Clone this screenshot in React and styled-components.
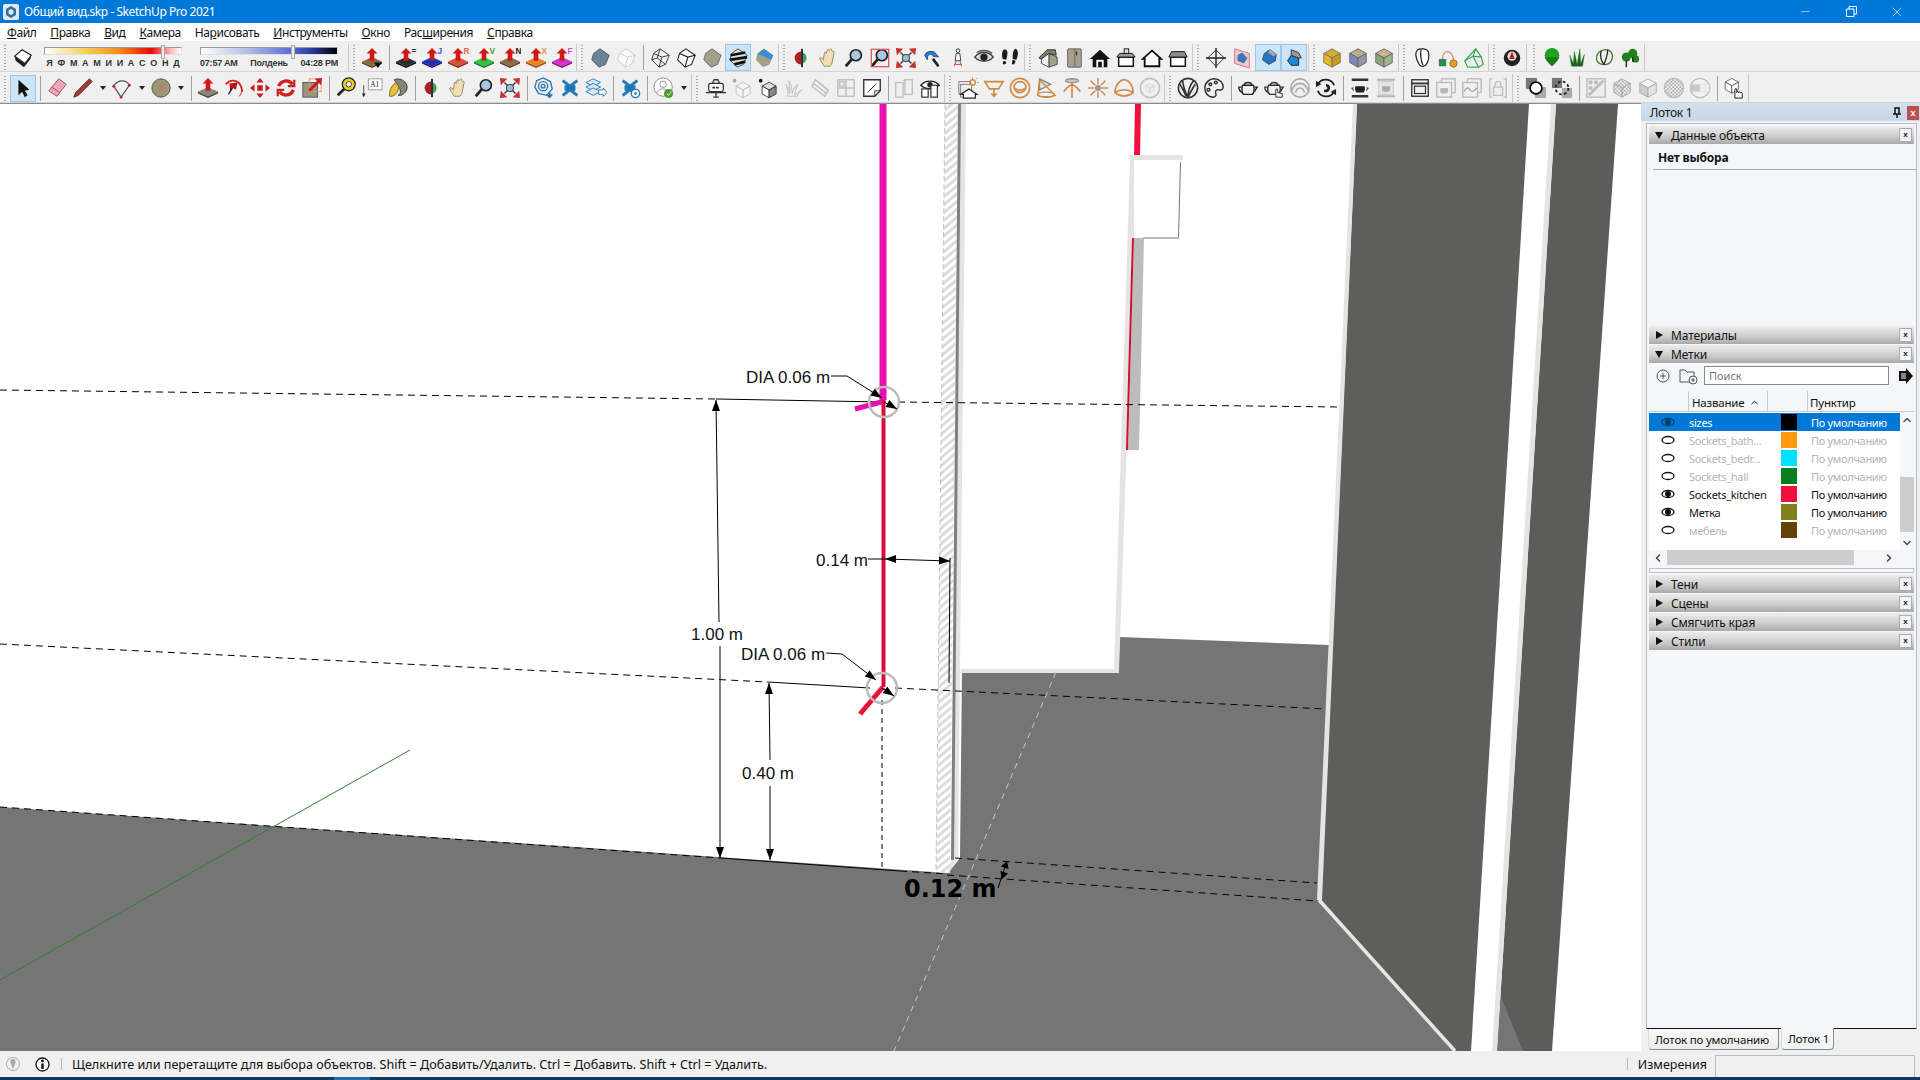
import React from 'react';
import styled, { createGlobalStyle } from 'styled-components';
import { ChevronUp, ChevronDown, ChevronLeft, ChevronRight, Minus, X } from 'lucide-react';

const UI = '"Noto Sans", "Open Sans", sans-serif';

const Global = createGlobalStyle`
  html, body { margin: 0; padding: 0; background: #f0f0f0; overflow: hidden; }
  body { font: 12px ${UI}; color: #111; }
`;

const Page = styled.div`
  width: 1920px;
  height: 1080px;
  display: flex;
  flex-direction: column;
  overflow: hidden;
`;

/* window chrome */
const TitleBar = styled.div`
  height: 23px;
  background: #0078d7;
  color: #fff;
  display: flex;
  align-items: center;
  padding-left: 3px;
`;
const TitleText = styled.span`
  margin-left: 5px;
  flex: 1;
  font-size: 12px;
  letter-spacing: -0.45px;
`;
const WinBtn = styled.div`
  width: 46px;
  height: 23px;
  display: flex;
  align-items: center;
  justify-content: center;
`;
const MenuBar = styled.div`
  height: 18px;
  box-sizing: border-box;
  padding: 2px 0 0 7px;
  background: #fff;
  display: flex;
  align-items: center;
  gap: 14px;
`;
const MenuItem = styled.span`
  font-size: 12px;
  letter-spacing: -0.42px;
  line-height: 16px;
`;

/* toolbars */
const Toolbars = styled.div`
  height: 62px;
  display: flex;
  flex-direction: column;
  background: #f0f0f0;
`;
const Row = styled.div`
  height: 31px;
  display: flex;
  padding-top: ${p => p.$pt}px;
  border-bottom: 1px solid #d4d4d4;
  box-sizing: border-box;
`;
const Group = styled.div`
  display: flex;
  align-items: center;
  padding-right: 1px;
  border-right: 1px solid #c8c8c8;
  margin-left: ${p => p.$ml || 0}px;
  ${p => (p.$width ? `width: ${p.$width}px; box-sizing: border-box;` : '')}
`;
const Grip = styled.div`
  width: ${p => p.$w || 10}px;
  height: 25px;
  flex: none;
  background: repeating-linear-gradient(#a8a8a8 0 1px, transparent 1px 3px) 4px 0 / 2px 100% no-repeat;
`;
const Btn = styled.div`
  width: 26px;
  height: 27px;
  flex: none;
  box-sizing: border-box;
  display: flex;
  align-items: center;
  justify-content: center;
  background: ${p => (p.$active ? '#cce4f7' : 'transparent')};
  border: 1px solid ${p => (p.$active ? '#9cc7ea' : 'transparent')};
`;
const Sep = styled.div`
  width: ${p => p.$w || 8}px;
  height: 25px;
  flex: none;
  display: flex;
  justify-content: center;
  &::after { content: ''; width: 1px; background: #a0a0a0; }
`;
const Drop = styled.div`
  width: 13px;
  flex: none;
  display: flex;
  justify-content: center;
  &::after {
    content: '';
    border: 3px solid transparent;
    border-top: 4px solid #222;
    border-bottom: 0;
  }
`;
const Ico = styled.svg`
  width: 22px;
  height: 22px;
  flex: none;
  display: block;
`;

/* shadow sliders */
const SliderBlock = styled.div`
  width: 138px;
  margin-left: ${p => p.$ml}px;
  flex: none;
  display: flex;
  flex-direction: column;
  padding-top: 1px;
`;
const Track = styled.div`
  position: relative;
  height: 6px;
  border: 1px solid #9a9a9a;
  border-bottom-color: #e0e0e0;
  border-right-color: #e0e0e0;
  background: ${p => p.$bg};
  margin-bottom: 3px;
`;
const Thumb = styled.div`
  position: absolute;
  top: -3px;
  left: ${p => p.$at}px;
  width: 4px;
  height: 14px;
  background: #eee;
  border: 1px solid #aaa;
  box-sizing: border-box;
`;
const TickRow = styled.div`
  display: flex;
  justify-content: ${p => (p.$even ? 'space-around' : 'space-between')};
  font: 700 9px "Liberation Sans", sans-serif;
  line-height: 11px;
  letter-spacing: ${p => (p.$even ? '0' : '-0.2px')};
  color: #333;
`;

/* main area */
const Main = styled.div`
  height: 948px;
  display: flex;
`;
const Viewport = styled.div`
  width: 1641px;
  flex: none;
  background: #fff;
  border-top: 1px solid #8a8a8a;
  box-sizing: border-box;
  & > svg { display: block; }
`;
const Label = styled.text`
  font: 17px "Liberation Sans", sans-serif;
  fill: #111;
`;
const BigLabel = styled.text`
  font: 700 24px "DejaVu Sans", sans-serif;
  fill: #000;
`;

/* tray */
const Tray = styled.div`
  width: 279px;
  flex: none;
  display: flex;
  flex-direction: column;
`;
const TrayTitle = styled.div`
  height: 18px;
  box-sizing: border-box;
  flex: none;
  display: flex;
  align-items: center;
  padding: 1px 1px 0 9px;
  gap: 5px;
  background: linear-gradient(#d3e0ee, #c6d6e6);
`;
const TrayName = styled.span`
  flex: 1;
  font-size: 12px;
  letter-spacing: -0.3px;
`;
const TrayClose = styled.div`
  width: 12px;
  height: 14px;
  background: #c05050;
  color: #fff;
  font: 700 9px/14px "Liberation Sans", sans-serif;
  text-align: center;
`;
const Frame = styled.div`
  flex: 1;
  margin: 2px 3px 0 5px;
  padding: 2px;
  border: 1px solid #b4bcc4;
  border-bottom: 1px solid #111;
  background: #f4f6f9;
  display: flex;
  flex-direction: column;
  gap: 1px;
`;
const PanelHead = styled.div`
  height: 18px;
  flex: none;
  display: flex;
  align-items: center;
  padding: 0 2px 0 6px;
  gap: 8px;
  background: linear-gradient(#ececec, #cfcfcf 55%, #a9a9a9);
`;
const PanelName = styled.span`
  flex: 1;
  font-size: 12px;
  letter-spacing: -0.15px;
`;
const CloseBox = styled.div`
  width: 13px;
  height: 14px;
  box-sizing: border-box;
  border: 1px solid #aab;
  background: #f2f2f2;
  font: 700 8px/12px "Liberation Sans", sans-serif;
  text-align: center;
`;
const InfoBody = styled.div`
  height: 180px;
  box-sizing: border-box;
  flex: none;
  padding: 4px 0 0 4px;
`;
const InfoTitle = styled.div`
  font-size: 12px;
  font-weight: 700;
  letter-spacing: -0.2px;
  padding: 0 0 3px 5px;
  border-bottom: 1px solid #a8a8a8;
  height: 21px;
  box-sizing: border-box;
  margin-right: -2px;
`;
const TagsBody = styled.div`
  flex: none;
  display: flex;
  flex-direction: column;
  padding-top: 2px;
`;
const SearchRow = styled.div`
  height: 19px;
  display: flex;
  align-items: center;
  padding-left: 6px;
`;
const SearchBox = styled.div`
  width: 185px;
  height: 19px;
  box-sizing: border-box;
  margin-left: 5px;
  border: 1px solid #8a8a8a;
  background: #fff;
  color: #777;
  font-size: 11px;
  line-height: 17px;
  padding-left: 4px;
`;
const SearchIcon = styled.svg`
  margin-left: ${p => p.$ml}px;
  flex: none;
`;
const ColHead = styled.div`
  height: 21px;
  margin-top: 6px;
  display: grid;
  grid-template-columns: 39px 79px 40px 95px;
  border-bottom: 1px solid #c9c9c9;
  box-sizing: border-box;
`;
const ColCell = styled.div`
  border-left: ${p => (p.$first ? '0' : '1px solid #c9c9c9')};
  padding: 3px 0 0 ${p => p.$pl || 4}px;
  box-sizing: border-box;
  font-size: 11.5px;
  letter-spacing: -0.2px;
  line-height: 16px;
  display: flex;
  align-items: center;
  gap: 5px;
`;
const ListWrap = styled.div`
  height: 137px;
  margin-top: 1px;
  display: flex;
`;
const List = styled.div`
  width: 251px;
  background: #fff;
`;
const TagRow = styled.div`
  height: 18px;
  display: grid;
  grid-template-columns: 40px 92px 16px 14px 1fr;
  align-items: center;
  background: ${p => (p.$selected ? '#0078d7' : 'transparent')};
  color: ${p => (p.$selected ? '#fff' : p.$off ? '#b4b4b4' : '#111')};
  font-size: 11px;
  letter-spacing: -0.3px;
`;
const EyeCell = styled.div`
  display: flex;
  justify-content: center;
  padding-right: 2px;
`;
const Swatch = styled.div`
  height: 16px;
  background: ${p => p.$c};
`;
const VScroll = styled.div`
  width: 14px;
  position: relative;
  display: flex;
  flex-direction: column;
  justify-content: space-between;
  align-items: center;
  padding: 1px 0;
  box-sizing: border-box;
  color: #555;
`;
const VThumb = styled.div`
  position: absolute;
  left: 0;
  right: 0;
  top: 64px;
  height: 55px;
  background: #cdcdcd;
`;
const HScroll = styled.div`
  height: 15px;
  display: flex;
  align-items: center;
  padding: 0 18px 0 3px;
  color: #444;
`;
const HThumb = styled.div`
  width: 187px;
  height: 15px;
  margin: 0 29px 0 3px;
  background: #cdcdcd;
`;
const DoubleLine = styled.div`
  height: 5px;
  margin: 3px 0 1px;
  border: 1px solid #c4c4c4;
  flex: none;
  box-sizing: border-box;
`;
const Spacer = styled.div`
  flex: 1;
`;
const TabRow = styled.div`
  height: 22px;
  flex: none;
  display: flex;
  padding-left: 7px;
  background: #f0f0f0;
`;
const Tab = styled.div`
  width: ${p => p.$w}px;
  box-sizing: border-box;
  padding-left: 6px;
  margin-right: 2px;
  margin-top: ${p => (p.$on ? '-1px' : 0)};
  height: ${p => (p.$on ? '22px' : '21px')};
  border: 1px solid #8a8a8a;
  border-top: 0;
  border-left-color: #ddd;
  border-radius: 0 0 4px 4px;
  background: ${p => (p.$on ? '#f4f6f9' : 'linear-gradient(#f7f7f7, #ececec)')};
  font-size: 11.5px;
  letter-spacing: -0.2px;
  line-height: 21px;
`;

/* status bar */
const StatusBar = styled.div`
  height: 26px;
  flex: none;
  display: flex;
  align-items: center;
  background: #f0f0f0;
  padding-left: 4px;
`;
const StatusIcon = styled.div`
  width: 18px;
  display: flex;
  justify-content: center;
  margin-left: ${p => p.$ml || 0}px;
`;
const StatusBreak = styled.div`
  width: 1px;
  height: 12px;
  background: #b8b8b8;
  margin: ${p => p.$m};
  flex: none;
`;
const StatusText = styled.span`
  flex: 1;
  font-size: 12.6px;
`;
const MeasureLabel = styled.span`
  font-size: 12.5px;
`;
const MeasureBox = styled.div`
  width: 200px;
  height: 22px;
  margin: 4px 5px 0 8px;
  box-sizing: border-box;
  border: 1px solid #aebccb;
  border-bottom: 0;
`;
const Taskbar = styled.div`
  height: 3px;
  flex: none;
  background: linear-gradient(90deg, #12395e 0 334px, #1f6aa8 334px 370px, #12395e 370px);
`;

/* ---- icons ---- */
const HEX = '12,2 22,9 18,19 11,22 3,14 5,7';
const push = (top, side, tag, tagColor) => (
  <>
    <polygon points="12,11 23,16 12,21 1,16" fill={top} />
    <polygon points="1,16 12,21 12,23 1,18" fill={side} />
    <polygon points="23,16 12,21 12,23 23,18" fill={side} />
    <polygon points="12,1 18,7 14.5,7 14.5,15 9.5,15 9.5,7 6,7" fill="#d01818" />
    {tag && <text x="18" y="8" fontSize="9" fontWeight="700" fontFamily="Liberation Sans" fill={tagColor}>{tag}</text>}
  </>
);
const cube = (t, l, r, s = '#555') => (
  <g stroke={s} strokeWidth="1">
    <polygon points="12,2 21,7 12,12 3,7" fill={t} />
    <polygon points="3,7 12,12 12,22 3,17" fill={l} />
    <polygon points="21,7 12,12 12,22 21,17" fill={r} />
  </g>
);
const zoomGlass = <><circle cx="14" cy="9" r="6" fill="#a9c8e8" stroke="#222" strokeWidth="1.8" /><path d="M9.5 13.5 3 21" stroke="#222" strokeWidth="3" /></>;
const orbit = <><path d="M11 5a7 7 0 0 0 0 14z" fill="#b02020" /><path d="M13 6a6.500 6.500 0 0 1 0 12z" fill="#3f9f5f" /><rect x="11" y="2" width="2" height="20" fill="#222" /></>;
const hand = <path d="M8 21C6 18 3 14 3 12c1-1 2 0 4 2l1-7c0-2 2-2 2 0l1-3c.5-2 2-1.500 2 0l1-1c1-1.500 2.500-1 2 1l1 1c1-1 2 0 1.500 2L16 19l-2 2z" fill="#f1deb4" stroke="#8f8060" />;
const extents = (
  <>
    <path d="M6 6 18 18M18 6 6 18" stroke="#333" strokeWidth="1.500" />
    <circle cx="12" cy="12" r="4" fill="#9dbcd8" stroke="#333" />
    <g fill="#c83030">
      <polygon points="1,1 9,2 2,9" /><polygon points="23,1 15,2 22,9" />
      <polygon points="1,23 9,22 2,15" /><polygon points="23,23 15,22 22,15" />
    </g>
  </>
);
const chev = (c) => <path d="M4 4l8 6 8-6M4 20l8-6 8 6M6 10.500h12M6 13.500h12" stroke={c} strokeWidth="3" fill="none" />;
const eyeBig = <><path d="M2 9c5-6 15-6 20 0-5 5-15 5-20 0z" fill="#fff" stroke="#222" strokeWidth="1.500" /><circle cx="12" cy="8.500" r="3" fill="#222" /></>;
const tea = (c, w = 1.500) => <g fill="none" stroke={c} strokeWidth={w}><path d="M6 9h12c2 5 0 10-2 10H8C6 19 4 14 6 9zM8 9c0-2 2-3 4-3s4 1 4 3" /><path d="M5 11H2c0 3 1 5 4 6M19 11h3l-3 5" /></g>;
const checks = (c) => <pattern id={`ch${c.slice(1)}`} width="4" height="4" patternUnits="userSpaceOnUse"><rect width="2" height="2" fill={c} /><rect x="2" y="2" width="2" height="2" fill={c} /></pattern>;
const ORANGE = '#cf8a45';

const icons = {
  shadow: <><polygon points="3,10 14,18 21,9 20,13 13,22 4,15" fill="#222" /><polygon points="3,10 11,3 21,9 14,18" fill="#fff" stroke="#222" strokeWidth="1.300" /></>,
  ppDrop: <>{push('#8a6a45', '#5b4226')}<polygon points="14,17 23,17 18.500,23" fill="#111" /></>,
  ppEq: push('#2c2c2c', '#111', '=', '#333'),
  ppJ: push('#1c2fb8', '#0f1b70', 'J', '#3a52d8'),
  ppR: push('#d9503c', '#8c2c20', 'R', '#e06a55'),
  ppV: push('#2fc43f', '#178025', 'V', '#36a43f'),
  ppN: push('#8a6a45', '#5b4226', 'N', '#222'),
  ppX: push('#e8842a', '#9c5412', 'X', '#e09040'),
  ppF: push('#d52fc9', '#86128a', 'F', '#d850d0'),
  solid: <polygon points={HEX} fill="#6c8299" stroke="#4a5a6a" />,
  ghost: <g fill="#fafafa" stroke="#c8c8c8"><polygon points={HEX} /><path d="M5 7l9 4 8-2M14 11l-3 11" fill="none" /></g>,
  xray: <g fill="none" stroke="#333"><polygon points={HEX} /><path d="M5 7l9 4 8-2M14 11l-3 11M12 2l-3 10-6 2M9 12l9 7" /></g>,
  hidden: <g fill="#fff" stroke="#222" strokeWidth="1.200"><polygon points={HEX} /><path d="M5 7l9 4 8-2M14 11l-3 11" fill="none" /></g>,
  shaded: <polygon points={HEX} fill="#a49f88" stroke="#666" />,
  stripes: <><polygon points={HEX} fill="#ddd" stroke="#444" /><path d="M4 9 20 6M3 14 22 11M8 19 20 16" stroke="#111" strokeWidth="3" /></>,
  blueTan: <><polygon points={HEX} fill="#a49f88" /><polygon points="12,2 22,9 20,14 6,8 5,7" fill="#3a8fd0" /></>,
  orbit, hand, zoom: zoomGlass,
  zoomWin: <>{zoomGlass}<rect x="2.500" y="2.500" width="19" height="19" fill="none" stroke="#d85a5a" strokeWidth="1.400" /></>,
  extents,
  prev: <><path d="M4 9a7 6 0 0 1 13-1l2 3-6-1c-1-3-5-3-6 1v3z" fill="#2f7fc8" stroke="#1c4f85" /><path d="M13 13l6 8" stroke="#223" strokeWidth="3" /></>,
  walker: <><circle cx="12" cy="4" r="2" fill="none" stroke="#333" /><path d="M10 7h4l1 8h-6z" fill="#fff" stroke="#333" /><path d="M10 15l-2 6M14 15l2 6M8 19h8" stroke="#d04040" fill="none" /></>,
  eye: <><path d="M2 11c5-7 15-7 20 0-5 6-15 6-20 0z" fill="#d8d8d8" stroke="#333" strokeWidth="1.400" /><circle cx="12" cy="11" r="4" fill="#222" /><path d="M4 6c5-3 12-3 17 1" stroke="#555" strokeWidth="1.500" fill="none" /></>,
  feet: <><path d="M5 3c3-1 5 1 4 6l-1 5-4-1C3 10 3 5 5 3zM5 15l3 1c0 3-3 4-4 2z" fill="#1b1b1b" /><path d="M18 2c3 1 3 5 2 9l-1 3-4-1c0-4 0-10 3-11zM15 14l3 1c0 3-3 6-4 3z" fill="#1b1b1b" /></>,
  iso: <><polygon points="13,7 22,11 22,19 13,22" fill="#a7a18a" stroke="#444" /><polygon points="13,7 5,11 5,18 13,22" fill="#f4f4f4" stroke="#444" /><polygon points="2,12 11,3 20,3 21,9 13,7 5,13" fill="#7d7d72" stroke="#333" /></>,
  fridge: <><rect x="5" y="2" width="15" height="20" rx="1" fill="#a7a18a" stroke="#666" /><path d="M13 2v20" stroke="#666" /><rect x="14" y="5" width="1.500" height="4" fill="#333" /></>,
  homeBlack: <><polygon points="12,3 23,13 20,13 20,22 4,22 4,13 1,13" fill="#111" /><path d="M8 22v-8h8v8z" fill="#fff" /><path d="M10 22v-6h4v6z" fill="#111" /></>,
  flat1: <><rect x="4" y="11" width="16" height="10" fill="#fff" stroke="#111" strokeWidth="1.600" /><polygon points="2,11 22,11 19,7 5,7" fill="#999" stroke="#111" /><rect x="10" y="2" width="5" height="5" fill="#ddd" stroke="#111" /></>,
  home2: <polygon points="12,4 22,13 20,13 20,21 4,21 4,13 2,13" fill="#fff" stroke="#111" strokeWidth="2" />,
  flat2: <><rect x="4" y="11" width="16" height="10" fill="#fff" stroke="#111" strokeWidth="1.600" /><polygon points="2,11 22,11 19,5 5,5" fill="#8a8a8a" stroke="#111" /></>,
  section: <g fill="none" stroke="#222"><path d="M12 3l9 9-9 9-9-9z" /><path d="M1 12h22M12 1v22" strokeWidth="1.500" /></g>,
  secPlane: <><polygon points="4,2 20,7 20,23 4,18" fill="#f3c7cf" stroke="#d07080" /><polygon points="12,6 18,12 14,18 7,15 7,9" fill="#3a78b8" /></>,
  secOn1: <><polygon points="14,3 21,8 20,15 13,19 6,14 8,7" fill="#2a75bb" stroke="#1c4e80" /><polygon points="14,3 21,8 18,10 12,6" fill="#aaa" /></>,
  secOn2: <><polygon points="9,9 17,12 17,20 9,20 5,15" fill="#1f86cf" stroke="#123" /><polygon points="9,3 17,6 20,12 17,12 9,9" fill="#999" stroke="#333" /></>,
  cubeY: cube('#d8ac38', '#e8b428', '#c99b24', '#775'),
  cubeB: cube('#b9ad90', '#7d88b8', '#9a94a8', '#666'),
  cubeG: cube('#c9b58f', '#8ea37e', '#9eb58c', '#666'),
  outline: <path d="M7 3c4-2 10-1 12 2 1 5 0 11-3 15-3 2-6 1-7-1C6 14 4 7 7 3zM11 3c-1 5 0 12 2 17" fill="#fff" stroke="#222" strokeWidth="1.300" />,
  tag: <><path d="M6 13C6 2 17 2 18 15" fill="none" stroke="#e58080" strokeWidth="1.300" /><rect x="2" y="13" width="8" height="8" fill="#2c8a5a" /><circle cx="18" cy="18" r="4" fill="#e2a030" stroke="#a06a10" /></>,
  crystal: <g fill="none" stroke="#39a54f" strokeWidth="1.300"><path d="M14 2l6 9 2 8-5 3-12 0-3-7z" /><path d="M14 2l-3 8-9 5M11 10l6 12M11 10l9 1" /></g>,
  ball: <><circle cx="12" cy="12" r="9" fill="#222" /><circle cx="12" cy="10" r="5" fill="#ddd" /><path d="M12 5l-3 8h6z" fill="#b02020" /></>,
  tree: <><circle cx="12" cy="9" r="8" fill="#22a020" /><path d="M4 11c2 5 5 8 8 10 3-2 6-5 8-10z" fill="#167c16" /></>,
  grass: <path d="M5 21 3 9l4 9 1-13 3 14 3-17 1 16 4-10-2 13z" fill="#2b5a20" stroke="#182" strokeWidth=".5" />,
  treeLine: <g fill="none" stroke="#4a7a20" strokeWidth="1.400"><path d="M12 3c6-1 10 3 9 9s-6 8-11 7-7-5-6-9 4-6 8-7z" /><path d="M9 4c-2 5 0 12 3 15M16 3c0 6-2 11-4 16" stroke="#222" /></g>,
  bushes: <><circle cx="8" cy="11" r="5" fill="#22801c" /><circle cx="15" cy="7" r="5" fill="#22801c" /><circle cx="18" cy="13" r="4" fill="#22801c" /><path d="M8 22v-7M15 16v-5" stroke="#222" strokeWidth="1.500" /></>,

  select: <polygon points="7,3 7,20 11,16 14,22 17,20 14,15 19,14" fill="#111" />,
  eraser: <><polygon points="14,2 22,8 12,21 3,15" fill="#f2a7b7" stroke="#8d4f5a" /><path d="M6 11l9 6" stroke="#8d4f5a" /></>,
  pencil: <path d="M19 2l3 3L7 20l-5 2 2-5z" fill="#a23a32" stroke="#5d2620" />,
  arc: <><path d="M3 10C8 2 17 3 20 9L11 22z" fill="none" stroke="#555" strokeWidth="1.300" /><g fill="#d02020"><circle cx="3" cy="10" r="1.600" /><circle cx="20" cy="9" r="1.600" /><circle cx="11" cy="22" r="1.600" /></g></>,
  circle: <><circle cx="12" cy="12" r="10" fill="#9a9678" stroke="#555" /><path d="M12 12l6-6" stroke="#e06060" /><circle cx="12" cy="12" r="2" fill="none" stroke="#e06060" /></>,
  ppGray: push('#8a8a7a', '#4a4a40'),
  follow: <><path d="M3 8C9 1 20 3 21 16" fill="none" stroke="#d02020" strokeWidth="2" /><path d="M18 21l3-6" stroke="#d02020" /><path d="M7 7l9-1-2 8-3-2-3 5z" fill="#b01818" /><path d="M10 12l-4 7" stroke="#222" strokeWidth="1.500" /></>,
  move: <g fill="#c81e1e"><polygon points="12,1 16,6 8,6" /><polygon points="12,23 16,18 8,18" /><polygon points="1,12 6,8 6,16" /><polygon points="23,12 18,8 18,16" /><rect x="9" y="9" width="6" height="6" /></g>,
  rotate: <g fill="none" stroke="#d02020" strokeWidth="3.600"><path d="M4 10a8.500 8.500 0 0 1 15-2" /><path d="M20 14a8.500 8.500 0 0 1-15 2" /><path d="M21 3v7h-7M3 21v-7h7" strokeWidth="2.500" /></g>,
  scale: <><rect x="2" y="6" width="16" height="16" fill="#9a9678" stroke="#555" /><rect x="9" y="2" width="13" height="14" fill="none" stroke="#e89090" /><path d="M9 15 21 3" stroke="#d01818" strokeWidth="3" /><polygon points="23,1 22,9 15,2" fill="#d01818" /></>,
  tape: <><circle cx="15" cy="8" r="7" fill="#e8d020" stroke="#222" strokeWidth="1.400" /><circle cx="15" cy="8" r="3" fill="#fff" stroke="#333" /><path d="M10 13l-7 7" stroke="#222" strokeWidth="3" /></>,
  text: <><rect x="8" y="2" width="15" height="12" fill="#fff" stroke="#999" /><text x="10" y="11" fontSize="8" fontFamily="Liberation Serif" fill="#222">A1</text><path d="M3 9v10" stroke="#444" /><polygon points="1,18 5,18 3,22" fill="#222" /></>,
  paint: <><path d="M8 3c6-3 14 2 14 8s-6 10-10 9c4-2 3-7 0-10z" fill="#86847c" stroke="#333" /><path d="M10 6C5 9 2 15 3 21c4 1 9-3 10-10z" fill="#e8c040" stroke="#7a6012" /></>,
  rings: <g fill="none" stroke="#2878b8" strokeWidth="1.500"><polygon points="11,1 19,5 21,13 15,20 6,18 2,11 4,4" /><circle cx="11" cy="10" r="5" /><circle cx="11" cy="10" r="2" /><path d="M18 16v6M15 19l3 3 3-3" strokeWidth="2" /></g>,
  chevB: chev('#1f78b8'),
  stack: <g stroke="#2878b8" fill="#dbe8f2"><polygon points="9,2 17,6 9,10 1,6" /><polygon points="9,7 17,11 9,15 1,11" /><polygon points="9,12 17,16 9,20 1,16" /><polygon points="15,14 20,14 20,12 24,17 20,21 20,19 15,19" fill="#fff" /></g>,
  chevGear: <>{chev('#1f78b8')}<circle cx="18" cy="18" r="4.500" fill="#fff" stroke="#2878b8" strokeWidth="1.500" /><circle cx="18" cy="18" r="1.500" fill="#2878b8" /></>,
  avatar: <><circle cx="11" cy="11" r="10" fill="#fff" stroke="#8a8a8a" /><circle cx="11" cy="8" r="3.500" fill="none" stroke="#8a8a8a" /><path d="M4 18c1-4 4-5 7-5s6 1 7 5" fill="none" stroke="#8a8a8a" /><circle cx="17" cy="18" r="5" fill="#4a9a2a" /><path d="M15 18l2 2 3-4" stroke="#fff" fill="none" /></>,
  robot: <><rect x="4" y="7" width="16" height="9" rx="2" fill="#fff" stroke="#333" strokeWidth="1.400" /><path d="M1 17h22M12 16v6M9 22h6M8 7l2-4h4l2 4" stroke="#333" strokeWidth="1.400" fill="none" /><path d="M8 11.500h8" stroke="#333" strokeWidth="2" strokeDasharray="3 1" /></>,
  cubeStarG: <><g transform="translate(3 4) scale(.85)">{cube('#f4f4f4', '#f4f4f4', '#f4f4f4', '#b8b8b8')}</g><circle cx="4" cy="4" r="2" fill="#a8a8a8" /></>,
  cubeStarD: <><g transform="translate(3 4) scale(.85)"><g strokeWidth="1.800">{cube('#ddd', '#fff', '#888', '#222')}</g></g><circle cx="4" cy="4" r="2" fill="#111" /></>,
  grassG: <path d="M5 21C6 15 4 10 3 8c3 2 4 6 4 10 1-5 0-11-1-14 3 3 4 9 4 14 1-4 3-8 6-10-1 3-3 8-3 12 2-3 5-5 8-6-3 2-5 5-6 7z" fill="none" stroke="#bdbdbd" />,
  pencilG: <g fill="none" stroke="#bdbdbd" strokeWidth="1.500"><polygon points="7,3 21,14 17,21 3,10" /><path d="M5 7l14 11M9 5l11 9" /></g>,
  gridG: <g fill="none" stroke="#c0c0c0" strokeWidth="1.500"><rect x="3" y="3" width="18" height="18" /><path d="M12 3v18M3 12h18" /><rect x="5" y="5" width="5" height="5" /></g>,
  note: <><path d="M3 3h18v12l-6 6H3z" fill="#fff" stroke="#333" strokeWidth="1.500" /><path d="M21 15h-6v6M7 17 17 7" stroke="#333" fill="none" /></>,
  rectsG: <g fill="none" stroke="#c0c0c0" strokeWidth="1.500"><rect x="3" y="6" width="8" height="16" /><rect x="13" y="3" width="8" height="16" /><path d="M11 4h2" /></g>,
  eyeRects: <>{eyeBig}<g fill="#fff" stroke="#333" strokeWidth="1.300"><rect x="3" y="13" width="7" height="9" /><rect x="13" y="9" width="7" height="13" /></g></>,
  houseSun: <><g fill="none" stroke="#777"><rect x="2" y="5" width="13" height="13" /><rect x="4" y="8" width="12" height="14" fill="#f0f0f0" /></g><polygon points="13,13 22,19 20,19 20,23 7,23 7,19 4,19" fill="#fff" stroke="#222" strokeWidth="1.300" /><circle cx="17" cy="6" r="3" fill="none" stroke={ORANGE} strokeWidth="1.500" /><path d="M17 0v2M22 6h2M21 2l1-1" stroke={ORANGE} /></>,
  funnel: <g fill="none" stroke={ORANGE} strokeWidth="1.800"><path d="M2 5h20l-5 8H7zM12 13v8M9 18l3 3 3-3" /></g>,
  ring: <g fill="none" stroke={ORANGE} strokeWidth="1.800"><circle cx="12" cy="12" r="10.500" /><ellipse cx="12" cy="11" rx="6.500" ry="6" /><path d="M6 12c3 3 9 3 12 0" /></g>,
  cone: <g fill="none" strokeWidth="1.500"><path d="M5 2v12l12-6z" stroke="#888" fill="#e8e8e8" /><path d="M5 3l-2 17c5 3 14 3 19 0L5 3" stroke={ORANGE} /><ellipse cx="12" cy="19" rx="9" ry="2.500" stroke={ORANGE} /></g>,
  lamp: <g fill="none" stroke={ORANGE} strokeWidth="1.800"><ellipse cx="12" cy="4" rx="7" ry="2" stroke="#999" fill="#ccc" /><path d="M12 6v17M12 8C8 10 5 13 3 16M12 8c4 2 7 5 9 8" /></g>,
  starO: <g stroke={ORANGE} strokeWidth="1.600"><path d="M12 1v7M12 16v7M1 12h7M16 12h7M4 4l5 5M15 15l5 5M4 20l5-5M15 9l5-5" /><circle cx="12" cy="12" r="2.500" fill="#999" stroke="#999" /></g>,
  dome: <g fill="none" stroke={ORANGE} strokeWidth="1.800"><path d="M2 17C3 6 10 2 13 3c5 1 9 7 9 14-6 5-14 5-20 0z" /><path d="M2 17c7-4 14-4 20 0" /></g>,
  cubeCircle: <><circle cx="12" cy="12" r="10.500" fill="none" stroke="#c0c0c0" strokeWidth="1.800" /><g transform="translate(6 6) scale(.5)">{cube('#eee', '#eee', '#eee', '#c0c0c0')}</g></>,
  vray: <g fill="none" stroke="#333" strokeWidth="1.800"><circle cx="12" cy="12" r="10.500" /><path d="M6 4c1 7 3 13 6 18 3-6 6-12 8-14M3 8c3 4 5 9 7 13M12 22c0-6 2-13 6-18" /></g>,
  palette: <g fill="none" stroke="#333" strokeWidth="1.600"><path d="M12 2c6 0 10 4 10 9 0 4-4 3-6 3s-3 2-2 4-1 4-3 4C5 22 2 17 2 12 2 6 7 2 12 2z" /><circle cx="8" cy="8" r="1.500" /><circle cx="14" cy="6" r="1.500" /><circle cx="6" cy="14" r="1.500" /></g>,
  tea: tea('#222'),
  teaHand: <>{tea('#333')}<path d="M14 22v-8c0-1.500 2-1.500 2 0v3l5 1v4z" fill="#fff" stroke="#222" /></>,
  swirlG: <g fill="none" stroke="#aaa" strokeWidth="1.800"><circle cx="12" cy="12" r="10" /><path d="M3 15c2-6 5-8 9-8s7 3 9 8M7 17c1-3 3-5 5-5s4 2 5 5" /></g>,
  swirlD: <g fill="none" stroke="#222" strokeWidth="2"><path d="M21 9A10 10 0 0 0 3 8M3 15a10 10 0 0 0 18 1" /><path d="M12 9a3 3 0 0 1 0 6h-2" strokeWidth="3" /><polygon points="1,4 7,8 1,11" fill="#222" stroke="none" /><polygon points="23,20 17,16 23,13" fill="#222" stroke="none" /></g>,
  shelf: <><path d="M3 3h18M3 21h18" stroke="#333" strokeWidth="2.500" /><path d="M7 10h10c1 3 0 7-2 7H9c-2 0-3-4-2-7z" fill="#222" /><path d="M5 12H3l2 3M19 12h2l-2 3" stroke="#222" fill="none" /></>,
  shelfG: <><path d="M2 3h20M2 21h20" stroke="#b4b4b4" strokeWidth="2" /><rect x="4" y="5" width="16" height="14" fill="#e4e4e4" stroke="#ccc" /><path d="M8 10h8c1 3 0 6-2 6h-4c-2 0-3-3-2-6z" fill="#aaa" /></>,
  window: <><rect x="3" y="3" width="18" height="18" fill="none" stroke="#333" strokeWidth="1.500" /><path d="M3 7h18" stroke="#333" strokeWidth="2" /><rect x="6" y="10" width="12" height="8" fill="none" stroke="#333" strokeWidth="1.300" /></>,
  windowTea: <><rect x="7" y="2" width="15" height="15" fill="none" stroke="#bbb" strokeWidth="1.500" /><rect x="2" y="6" width="16" height="16" fill="#f0f0f0" stroke="#bbb" strokeWidth="1.500" /><path d="M6 12h8c1 3 0 6-2 6H8c-2 0-3-3-2-6z" fill="#b8b8b8" /></>,
  windowWave: <><rect x="7" y="2" width="15" height="15" fill="none" stroke="#bbb" strokeWidth="1.500" /><rect x="2" y="6" width="16" height="16" fill="#f0f0f0" stroke="#bbb" strokeWidth="1.500" /><path d="M3 16c3-5 5-5 7-2s4 2 7-2" fill="none" stroke="#aaa" strokeWidth="1.500" /></>,
  lock: <g fill="none" stroke="#c0c0c0" strokeWidth="1.500"><path d="M6 2H3v20h3M18 2h3v20h-3" /><rect x="7" y="11" width="10" height="9" /><path d="M9 11V8c0-4 6-4 6 0v3" /></g>,
  circleSq: <><rect x="1" y="1" width="12" height="12" fill="#777" /><rect x="11" y="11" width="12" height="12" fill="#aaa" /><circle cx="12" cy="12" r="6.500" fill="#fff" stroke="#111" strokeWidth="2" /></>,
  dashSq: <><rect x="1" y="1" width="11" height="11" fill="#777" /><rect x="12" y="12" width="11" height="11" fill="#aaa" /><circle cx="12" cy="12" r="7" fill="none" stroke="#222" strokeWidth="2" strokeDasharray="3 2.500" /></>,
  diagG: <><rect x="2" y="2" width="20" height="20" fill="#eee" stroke="#bbb" strokeWidth="1.500" /><path d="M4 20 20 4" stroke="#bbb" strokeWidth="3" /><rect x="4" y="4" width="4" height="4" fill="#bbb" /><rect x="10" y="4" width="4" height="4" fill="#bbb" /><rect x="4" y="10" width="4" height="4" fill="#bbb" /></>,
  cubeCh1: <><defs>{checks('#b4b4b4')}</defs>{cube('url(#chb4b4b4)', 'url(#chb4b4b4)', 'url(#chb4b4b4)', '#aaa')}</>,
  cubeCh2: cube('#f2f2f2', '#cfcfcf', '#e4e4e4', '#aaa'),
  circleCh: <circle cx="12" cy="12" r="10.500" fill="url(#chb4b4b4)" stroke="#bbb" strokeWidth="1.500" />,
  circleHalf: <><circle cx="12" cy="12" r="10.500" fill="#f2f2f2" stroke="#bbb" strokeWidth="1.500" /><path d="M2 8h20v8H2z" fill="#c8c8c8" /><rect x="12" y="8" width="10" height="8" fill="#eee" /></>,
  cubeHand: <><g transform="scale(.8)">{cube('#fff', '#fff', '#fff', '#444')}</g><path d="M13 23v-9c0-2 2-2 2 0v3c0-1.500 2-1.500 2 0 0-1 2-1 2 .5 0-1 2-1 2 .5V23z" fill="#fff" stroke="#111" /></>
};

const Icon = ({ name }) => <Ico viewBox="0 0 24 24">{icons[name]}</Ico>;

// tokens: '|' separator, '!' narrow separator, 'v' dropdown arrow, '*name' pressed button
const Tool = ({ t }) => {
  if (t === '|') return <Sep />;
  if (t === '!') return <Sep $w={6} />;
  if (t === 'v') return <Drop />;
  const on = t[0] === '*';
  return <Btn $active={on}><Icon name={on ? t.slice(1) : t} /></Btn>;
};
const Tools = ({ list }) => list.split(' ').map((t, i) => <Tool key={i} t={t} />);

const row1 = [
  'ppDrop | ppEq ppJ ppR ppV ppN ppX ppF',
  'solid ghost | xray hidden shaded *stripes blueTan',
  'orbit hand zoom zoomWin extents prev walker eye feet',
  'iso fridge homeBlack flat1 home2 flat2',
  'section secPlane *secOn1 *secOn2',
  'cubeY cubeB cubeG',
  'outline tag crystal',
  'ball'
];

const months = ['Я', 'Ф', 'М', 'А', 'М', 'И', 'И', 'А', 'С', 'О', 'Н', 'Д'];

const tags = [
  { n: 'sizes', c: '#000000', on: true, sel: true },
  { n: 'Sockets_bath…', c: '#ff9a0c' },
  { n: 'Sockets_bedr…', c: '#00e0ff' },
  { n: 'Sockets_hall', c: '#0a7d1e' },
  { n: 'Sockets_kitchen', c: '#f0103f', on: true },
  { n: 'Метка', c: '#7f7f1d', on: true },
  { n: 'мебель', c: '#634206' }
];

const Glyph = ({ open, color = '#111' }) => (
  <svg width="14" height="10" viewBox="0 0 14 10">
    <ellipse cx="7" cy="5" rx="6" ry="3.500" fill={open && color !== '#111' ? 'none' : '#fff'} stroke={color} strokeWidth="1.300" />
    {open && <circle cx="7" cy="5" r="3" fill={color} />}
  </svg>
);
const Tri = ({ open }) => (
  <svg width="8" height="8" viewBox="0 0 8 8">
    <polygon points={open ? '0,1 8,1 4,8' : '1,0 8,4 1,8'} fill="#111" />
  </svg>
);

const Panel = ({ name, open }) => (
  <PanelHead>
    <Tri open={open} />
    <PanelName>{name}</PanelName>
    <CloseBox>x</CloseBox>
  </PanelHead>
);

const Head = ({ x, y, a, l = 11, w = 4 }) => <polygon points={`0,0 ${-l},${-w} ${-l},${w}`} fill="#000" transform={`translate(${x} ${y}) rotate(${a})`} />;
const Line = ({ d, w = 1, c = '#000', dash }) => <path d={d} fill="none" stroke={c} strokeWidth={w} strokeDasharray={dash} />;
const DASH = '7 5';

const Scene = () => (
  <svg width="1641" height="947" viewBox="0 104 1641 947">
    <defs>
      <pattern id="hatch" width="6" height="6" patternUnits="userSpaceOnUse" patternTransform="rotate(-40)">
        <rect width="6" height="3" fill="#dcdcdc" />
      </pattern>
    </defs>
    <rect x="0" y="104" width="1641" height="947" fill="#fff" />
    {/* floor */}
    <polygon points="0,807 948,873 960,858 962,671 1118,671 1120,637 1330,645 1320,900 1455,1051 0,1051" fill="#757575" />
    {/* walls on the right */}
    <polygon points="1357,104 1529,104 1471,1051 1455,1051 1321,900" fill="#5e5e5d" />
    <polygon points="1556,104 1618,104 1552,1051 1497,1051" fill="#5c5c5b" />
    <polygon points="1501,997 1523,1051 1497,1051" fill="#757575" />
    <polygon points="1551,104 1556,104 1497,1051 1492,1051" fill="#e4e4e2" />
    <polygon points="1353,104 1357,104 1322,900 1317,900" fill="#e4e4e2" />
    <Line d="M1319 900 1455 1051" w={3.500} c="#e6e6e4" />
    {/* column by the sockets */}
    <polygon points="945,104 958,104 950,873 936,873" fill="url(#hatch)" />
    <Line d="M945 104 936 873" c="#c4c4c4" dash="5 3" />
    <polygon points="961,104 966,104 958,858 949,873 948,873 951,860" fill="#e4e4e2" />
    <polygon points="958,104 961,104 954,860 951,860" fill="#808080" />
    {/* white panel edge */}
    <polygon points="961,669 1119,669 1119,673 960,673" fill="#e4e4e2" />
    <polygon points="1130,160 1134,160 1134,238 1119,671 1114,671" fill="#e4e4e2" />
    {/* wall unit */}
    <polygon points="1135,104 1141,104 1140,156 1134,156" fill="#f0103f" />
    <rect x="1130" y="155" width="53" height="5" fill="#e4e4e2" />
    <Line d="M1180.500 162 1178.500 238 H1143" c="#777" />
    <polygon points="1134,238 1144,238 1139,450 1128,450" fill="#bcbcba" />
    <Line d="M1133 238 1127 450" w={2} c="#d0103a" />
    {/* guides */}
    <Line d="M0 390 716 399" dash={DASH} />
    <Line d="M716 399 883 402" />
    <Line d="M898 402 1341 407" dash={DASH} />
    <Line d="M0 644 768 682" dash={DASH} />
    <Line d="M768 682 870 688" />
    <Line d="M895 688 1326 709" dash={DASH} />
    <Line d="M1056 672 894 1051" c="#c8c8c8" dash="6 5" />
    <Line d="M0 980 410 750" c="#2f7f2f" />
    <Line d="M0 807 720 858" dash={DASH} />
    <Line d="M720 858 900 871" />
    <Line d="M900 871 948 874" dash={DASH} />
    <Line d="M955 858 1317 883" dash={DASH} />
    <Line d="M947 875 1317 901" dash={DASH} />
    <Line d="M882 700 882 870" dash="5 4" />
    {/* pipes */}
    <Line d="M883 104 883 400" w={7} c="#e80fb0" />
    <Line d="M855 409 885 401" w={5} c="#e80fb0" />
    <Line d="M883.500 400 883.500 687" w={4} c="#d6103e" />
    <Line d="M860 714 883 687" w={5} c="#e8103c" />
    <circle cx="884" cy="402" r="15" fill="none" stroke="#bcbcbc" strokeWidth="2.500" />
    <circle cx="882" cy="688" r="15" fill="none" stroke="#bcbcbc" strokeWidth="2.500" />
    {/* dimensions */}
    <Line d="M716 400 719 622M720 646 720 858" />
    <Head x={716} y={400} a={-90} />
    <Head x={720} y={858} a={90} />
    <Line d="M769 683 770 760M770 786 770 860" />
    <Head x={769} y={683} a={-90} />
    <Head x={770} y={860} a={90} />
    <Line d="M868 559 885 559 950 561" />
    <Line d="M950 558 949 683" />
    <Head x={885} y={559} a={180} />
    <Head x={950} y={561} a={2} />
    <Line d="M831 376 847 376 882 398" />
    <Head x={882} y={398} a={32} />
    <Line d="M884 402 897 409" />
    <Head x={897} y={409} a={30} />
    <Line d="M826 653 842 654 876 680" />
    <Head x={876} y={680} a={37} />
    <Line d="M882 688 894 696" />
    <Head x={894} y={696} a={35} />
    <Line d="M1007 861 998 888" />
    <Head x={1007} y={861} a={-72} l={7} />
    <Head x={1002} y={879} a={108} l={7} />
    <Label x="746" y="383">DIA 0.06 m</Label>
    <Label x="741" y="660">DIA 0.06 m</Label>
    <Label x="816" y="566">0.14 m</Label>
    <Label x="691" y="640">1.00 m</Label>
    <Label x="742" y="779">0.40 m</Label>
    <BigLabel x="904" y="897">0.12 m</BigLabel>
  </svg>
);

export default function App() {
  return (
    <Page>
      <Global />
      <TitleBar>
        <svg width="16" height="16" viewBox="0 0 16 16">
          <rect width="16" height="16" rx="2" fill="#dfe8f0" />
          <path d="M8 2 13 5v6l-5 3-5-3V5z" fill="#2e6f9e" />
          <path d="M8 5l2.500 1.500v3L8 11 5.500 9.500v-3z" fill="#dfe8f0" />
        </svg>
        <TitleText>Общий вид.skp - SketchUp Pro 2021</TitleText>
        <WinBtn><Minus size={13} strokeWidth={1} color="#fff" /></WinBtn>
        <WinBtn>
          <svg width="11" height="11" viewBox="0 0 11 11" fill="none" stroke="#fff">
            <path d="M.5 3h7.500v7.500H.5zM3 3V.5h7.500V8H8" />
          </svg>
        </WinBtn>
        <WinBtn><X size={16} strokeWidth={1} color="#fff" /></WinBtn>
      </TitleBar>
      <MenuBar>
        <MenuItem><u>Ф</u>айл</MenuItem>
        <MenuItem><u>П</u>равка</MenuItem>
        <MenuItem><u>В</u>ид</MenuItem>
        <MenuItem><u>К</u>амера</MenuItem>
        <MenuItem>На<u>р</u>исовать</MenuItem>
        <MenuItem><u>И</u>нструменты</MenuItem>
        <MenuItem><u>О</u>кно</MenuItem>
        <MenuItem>Рас<u>ш</u>ирения</MenuItem>
        <MenuItem><u>С</u>правка</MenuItem>
      </MenuBar>
      <Toolbars>
        <Row $pt={3}>
          <Group $width={349}>
            <Grip />
            <Tool t="shadow" />
            <SliderBlock $ml={8}>
              <Track $bg="linear-gradient(90deg,#fff,#f6cf58 30%,#f48a1c 55%,#e80808 78%,#ffb4b4 92%,#fff)">
                <Thumb $at={116} />
              </Track>
              <TickRow $even>{months.map((m, i) => <span key={i}>{m}</span>)}</TickRow>
            </SliderBlock>
            <SliderBlock $ml={18}>
              <Track $bg="linear-gradient(90deg,#fff,#aebde4 35%,#5a6ed8 66%,#2a3a9a 82%,#000)">
                <Thumb $at={90} />
              </Track>
              <TickRow><span>07:57 AM</span><span>Полдень</span><span>04:28 PM</span></TickRow>
            </SliderBlock>
          </Group>
          {row1.map((list, i) => (
            <Group key={i}><Grip /><Tools list={list} /></Group>
          ))}
          <Group $ml={2}><Grip /><Tools list="tree grass treeLine bushes" /></Group>
        </Row>
        <Row $pt={2}>
          <Group>
            <Grip />
            <Tools list="*select | eraser pencil v arc v circle v | ppGray follow move rotate scale | tape text paint | orbit hand zoom extents | rings chevB stack | chevGear | avatar v" />
          </Group>
          <Group>
            <Grip $w={11} />
            <Tools list="robot cubeStarG cubeStarD grassG pencilG gridG note ! rectsG eyeRects" />
          </Group>
          <Group>
            <Grip />
            <Tools list="houseSun funnel ring cone lamp starO dome cubeCircle" />
          </Group>
          <Group>
            <Grip />
            <Tools list="vray palette | tea teaHand swirlG swirlD | shelf shelfG | window windowTea windowWave lock" />
          </Group>
          <Group>
            <Grip />
            <Tools list="circleSq dashSq | diagG cubeCh1 cubeCh2 circleCh circleHalf | cubeHand" />
          </Group>
        </Row>
      </Toolbars>
      <Main>
        <Viewport><Scene /></Viewport>
        <Tray>
          <TrayTitle>
            <TrayName>Лоток 1</TrayName>
            <svg width="10" height="12" viewBox="0 0 10 12"><path d="M3 1h4v6H3zM1 7h8M5 7v4" fill="none" stroke="#111" strokeWidth="1.500" /></svg>
            <TrayClose>x</TrayClose>
          </TrayTitle>
          <Frame>
            <Panel name="Данные объекта" open />
            <InfoBody><InfoTitle>Нет выбора</InfoTitle></InfoBody>
            <Panel name="Материалы" />
            <Panel name="Метки" open />
            <TagsBody>
              <SearchRow>
                <svg width="16" height="16" viewBox="0 0 16 16" fill="none" stroke="#555"><circle cx="8" cy="8" r="6" /><path d="M8 5v6M5 8h6" /></svg>
                <SearchIcon $ml={8} width="20" height="18" viewBox="0 0 20 18" fill="none" stroke="#555"><path d="M1 15V3h5l2 2h7v5M1 15h9" /><circle cx="14" cy="13" r="4" /><path d="M14 11v4M12 13h4" /></SearchIcon>
                <SearchBox>Поиск</SearchBox>
                <SearchIcon $ml={9} width="15" height="16" viewBox="0 0 15 16"><polygon points="1,3 8,3 8,0 15,8 8,16 8,13 1,13" fill="#111" /><path d="M3 6h5M3 8h5M3 10h5" stroke="#fff" /></SearchIcon>
              </SearchRow>
              <ColHead>
                <ColCell $first />
                <ColCell $pl={3}>Название <ChevronUp size={11} strokeWidth={2} /></ColCell>
                <ColCell />
                <ColCell $pl={2}>Пунктир</ColCell>
              </ColHead>
              <ListWrap>
                <List>
                  {tags.map(t => (
                    <TagRow key={t.n} $selected={t.sel} $off={!t.on}>
                      <EyeCell><Glyph open={t.on} color={t.sel ? '#0a3d66' : '#111'} /></EyeCell>
                      <span>{t.n}</span>
                      <Swatch $c={t.c} />
                      <span />
                      <span>По умолчанию</span>
                    </TagRow>
                  ))}
                </List>
                <VScroll>
                  <ChevronUp size={12} strokeWidth={3} />
                  <VThumb />
                  <ChevronDown size={12} strokeWidth={3} />
                </VScroll>
              </ListWrap>
              <HScroll>
                <ChevronLeft size={12} strokeWidth={3} />
                <HThumb />
                <ChevronRight size={12} strokeWidth={3} />
              </HScroll>
              <DoubleLine />
            </TagsBody>
            <Panel name="Тени" />
            <Panel name="Сцены" />
            <Panel name="Смягчить края" />
            <Panel name="Стили" />
            <Spacer />
          </Frame>
          <TabRow>
            <Tab $w={131}>Лоток по умолчанию</Tab>
            <Tab $w={53} $on>Лоток 1</Tab>
          </TabRow>
        </Tray>
      </Main>
      <StatusBar>
        <StatusIcon>
          <svg width="14" height="16" viewBox="0 0 14 16"><circle cx="7" cy="8" r="6.500" fill="none" stroke="#aaa" /><path d="M7 3c3 0 3 3 2 5l-2 5-2-5C4 6 4 3 7 3z" fill="#aaa" /></svg>
        </StatusIcon>
        <StatusIcon $ml={11}>
          <svg width="15" height="15" viewBox="0 0 15 15"><circle cx="7.500" cy="7.500" r="6.500" fill="#fff" stroke="#111" strokeWidth="1.300" /><circle cx="7.500" cy="4" r="1.400" fill="#111" /><rect x="6.300" y="6.500" width="2.400" height="5.500" fill="#111" /></svg>
        </StatusIcon>
        <StatusBreak $m="0 10px 0 10px" />
        <StatusText>Щелкните или перетащите для выбора объектов. Shift = Добавить/Удалить. Ctrl = Добавить. Shift + Ctrl = Удалить.</StatusText>
        <StatusBreak $m="0 10px 0 0" />
        <MeasureLabel>Измерения</MeasureLabel>
        <MeasureBox />
      </StatusBar>
      <Taskbar />
    </Page>
  );
}
